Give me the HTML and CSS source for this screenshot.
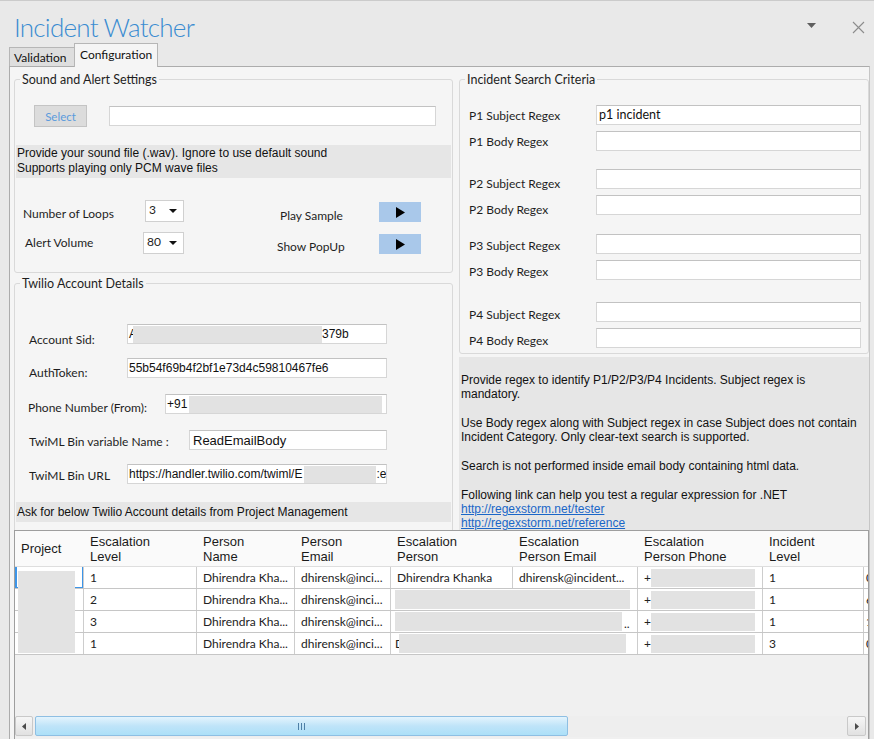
FILE: index.html
```html
<!DOCTYPE html>
<html lang="en">
<head>
<meta charset="utf-8">
<title>Incident Watcher</title>
<link rel="stylesheet" href="styles.css">
</head>
<body>
<div class="window">
  <header class="titlebar">
    <h1 class="app-title">Incident Watcher</h1>
    <div class="win-controls">
      <svg class="ctl-caret" width="9" height="5" viewBox="0 0 9 5"><path d="M0 0H9L4.5 5Z" fill="#5f5f5f"/></svg>
      <svg class="ctl-close" width="13" height="13" viewBox="0 0 13 13"><path d="M1 1L12 12M12 1L1 12" stroke="#8c8c8c" stroke-width="1.1" fill="none"/></svg>
    </div>
  </header>

  <nav class="tabs">
    <div class="tab tab-validation">Validation</div>
    <div class="tab tab-active">Configuration</div>
  </nav>

  <main class="tabpage">
    <section class="upper">
      <div class="col col-left">
        <fieldset class="group group-sound">
          <legend>Sound and Alert Settings</legend>
          <div class="select-row">
            <button class="btn-select" type="button">Select</button>
            <div class="textbox tb-file"></div>
          </div>
          <div class="note note-sound">Provide your sound file (.wav). Ignore to use default sound<br>Supports playing only PCM wave files</div>
          <div class="opt-row opt-loops">
            <span class="lbl lbl-loops">Number of Loops</span>
            <div class="combo combo-loops"><span class="combo-val">3</span><span class="combo-caret"></span></div>
            <span class="lbl lbl-play">Play Sample</span>
            <button class="btn-play" type="button"><svg width="9" height="11" viewBox="0 0 9 11"><path d="M0 0L9 5.5L0 11Z" fill="#000"/></svg></button>
          </div>
          <div class="opt-row opt-volume">
            <span class="lbl lbl-volume">Alert Volume</span>
            <div class="combo combo-volume"><span class="combo-val">80</span><span class="combo-caret"></span></div>
            <span class="lbl lbl-popup">Show PopUp</span>
            <button class="btn-play" type="button"><svg width="9" height="11" viewBox="0 0 9 11"><path d="M0 0L9 5.5L0 11Z" fill="#000"/></svg></button>
          </div>
        </fieldset>

        <fieldset class="group group-twilio">
          <legend>Twilio Account Details</legend>
          <div class="trow trow-sid">
            <span class="lbl tl tl-sid">Account Sid:</span>
            <div class="textbox tb-tw tb-w260"><span>A</span><span class="redact r-sid"></span><span>379b</span></div>
          </div>
          <div class="trow trow-token">
            <span class="lbl tl tl-token">AuthToken:</span>
            <div class="textbox tb-tw tb-w260"><span>55b54f69b4f2bf1e73d4c59810467fe6</span></div>
          </div>
          <div class="trow trow-phone">
            <span class="lbl tl tl-phone">Phone Number (From):</span>
            <div class="textbox tb-tw tb-w222"><span>+91</span><span class="redact r-phone"></span></div>
          </div>
          <div class="trow trow-var">
            <span class="lbl tl tl-var">TwiML Bin variable Name :</span>
            <div class="textbox tb-tw tb-w198"><span class="tw-big">ReadEmailBody</span></div>
          </div>
          <div class="trow trow-url">
            <span class="lbl tl tl-url">TwiML Bin URL</span>
            <div class="textbox tb-tw tb-w260"><span>https://handler.twilio.com/twiml/E</span><span class="redact r-url"></span><span>:e</span></div>
          </div>
          <div class="note note-twilio">Ask for below Twilio Account details from Project Management</div>
        </fieldset>
      </div>

      <div class="col col-right">
        <fieldset class="group group-search">
          <legend>Incident Search Criteria</legend>
          <div class="rpair rp1">
            <div class="rrow"><span class="lbl rl">P1 Subject Regex</span><div class="textbox tb-regex">p1 incident</div></div>
            <div class="rrow"><span class="lbl rl">P1 Body Regex</span><div class="textbox tb-regex"></div></div>
          </div>
          <div class="rpair rp2">
            <div class="rrow"><span class="lbl rl">P2 Subject Regex</span><div class="textbox tb-regex"></div></div>
            <div class="rrow"><span class="lbl rl">P2 Body Regex</span><div class="textbox tb-regex"></div></div>
          </div>
          <div class="rpair rp3">
            <div class="rrow"><span class="lbl rl">P3 Subject Regex</span><div class="textbox tb-regex"></div></div>
            <div class="rrow"><span class="lbl rl">P3 Body Regex</span><div class="textbox tb-regex"></div></div>
          </div>
          <div class="rpair rp4">
            <div class="rrow"><span class="lbl rl">P4 Subject Regex</span><div class="textbox tb-regex"></div></div>
            <div class="rrow"><span class="lbl rl">P4 Body Regex</span><div class="textbox tb-regex"></div></div>
          </div>
        </fieldset>
        <div class="note note-search">
          <p>Provide regex to identify P1/P2/P3/P4 Incidents. Subject regex is<br>mandatory.</p>
          <p>Use Body regex along with Subject regex in case Subject does not contain<br>Incident Category. Only clear-text search is supported.</p>
          <p>Search is not performed inside email body containing html data.</p>
          <p>Following link can help you test a regular expression for .NET<br><a href="#">http://regexstorm.net/tester</a><br><a href="#">http://regexstorm.net/reference</a></p>
        </div>
      </div>
    </section>

    <section class="datagrid">
      <div class="gviewport">
        <div class="grow ghead">
          <div class="hcell hfirst">Project</div>
          <div class="hcell">Escalation<br>Level</div>
          <div class="hcell">Person<br>Name</div>
          <div class="hcell">Person<br>Email</div>
          <div class="hcell">Escalation<br>Person</div>
          <div class="hcell">Escalation<br>Person Email</div>
          <div class="hcell">Escalation<br>Person Phone</div>
          <div class="hcell">Incident<br>Level</div>
          <div class="hcell"></div>
        </div>
        <div class="gbody">
          <div class="grow drow">
            <div class="dcell dfirst focus"></div>
            <div class="dcell">1</div>
            <div class="dcell">Dhirendra Kha...</div>
            <div class="dcell">dhirensk@inci...</div>
            <div class="dcell">Dhirendra Khanka</div>
            <div class="dcell">dhirensk@incident...</div>
            <div class="dcell">+<span class="redact r-ph"></span></div>
            <div class="dcell">1</div>
            <div class="dcell dlast">0</div>
          </div>
          <div class="grow drow">
            <div class="dcell dfirst"></div>
            <div class="dcell">2</div>
            <div class="dcell">Dhirendra Kha...</div>
            <div class="dcell">dhirensk@inci...</div>
            <div class="dcell span2"><span class="redact r-esc2"></span></div>
            <div class="dcell">+<span class="redact r-ph"></span></div>
            <div class="dcell">1</div>
            <div class="dcell dlast">6</div>
          </div>
          <div class="grow drow">
            <div class="dcell dfirst"></div>
            <div class="dcell">3</div>
            <div class="dcell">Dhirendra Kha...</div>
            <div class="dcell">dhirensk@inci...</div>
            <div class="dcell span2"><span class="redact r-esc3"></span><span class="dots">..</span></div>
            <div class="dcell">+<span class="redact r-ph"></span></div>
            <div class="dcell">1</div>
            <div class="dcell dlast">1</div>
          </div>
          <div class="grow drow">
            <div class="dcell dfirst"></div>
            <div class="dcell">1</div>
            <div class="dcell">Dhirendra Kha...</div>
            <div class="dcell">dhirensk@inci...</div>
            <div class="dcell span2"><span class="cut">D</span><span class="redact r-esc4"></span></div>
            <div class="dcell">+<span class="redact r-ph"></span></div>
            <div class="dcell">3</div>
            <div class="dcell dlast">0</div>
          </div>
          <div class="redact-project"></div>
        </div>
      </div>
      <div class="hscroll">
        <div class="sb-btn"><svg width="4" height="7" viewBox="0 0 4 7"><path d="M4 0V7L0 3.5Z" fill="#4a4a4a"/></svg></div>
        <div class="sb-thumb"><span class="grip"></span><span class="grip"></span><span class="grip"></span></div>
        <div class="sb-track"></div>
        <div class="sb-btn sb-right"><svg width="4" height="7" viewBox="0 0 4 7"><path d="M0 0V7L4 3.5Z" fill="#4a4a4a"/></svg></div>
      </div>
    </section>
  </main>
</div>
</body>
</html>
```

FILE: styles.css
```css
* { box-sizing: border-box; }
html, body { margin: 0; padding: 0; }
body {
  width: 874px;
  height: 739px;
  overflow: hidden;
  background: #e9e9e9;
  font-family: "Lato", "Open Sans", sans-serif;
  color: #1e1e1e;
}

.window {
  width: 874px;
  height: 739px;
  background: #e9e9e9;
  border-top: 1px solid #cbcbcb;
  display: flex;
  flex-direction: column;
  overflow: hidden;
}

/* Title bar */
.titlebar {
  height: 42px;
  flex: none;
  display: flex;
  justify-content: space-between;
}
.app-title {
  margin: 0;
  padding: 14px 0 0 14px;
  font-family: "Lato", "Open Sans", sans-serif;
  font-weight: 300;
  font-size: 26px;
  line-height: 25px;
  letter-spacing: -0.75px;
  color: #3a8cd1;
}
.win-controls {
  display: flex;
  align-items: flex-start;
  gap: 36px;
  padding-right: 9px;
}
.ctl-caret { margin-top: 22px; }
.ctl-close { margin-top: 20px; }

/* Tabs */
.tabs {
  height: 23px;
  flex: none;
  display: flex;
  align-items: flex-end;
  padding-left: 9px;
}
.tab {
  font-size: 12px;
  line-height: 17px;
  color: #111;
  border: 1px solid #b6b6b6;
  border-bottom: none;
  white-space: nowrap;
}
.tab-validation {
  height: 19px;
  width: 65px;
  background: #dedede;
  padding: 1px 0 0 4px;
  border-right: none;
}
.tab-active {
  height: 24px;
  width: 84px;
  background: #f5f5f5;
  padding: 2px 0 0 5px;
  margin-bottom: -1px;
  position: relative;
  z-index: 1;
}

/* Tab page */
.tabpage {
  flex: 1;
  margin-left: 9px;
  width: 861px;
  border: 1px solid #acacac;
  border-bottom: none;
  border-right-color: #c6c6c6;
  background: #f5f5f5;
  padding-left: 4px;
  display: flex;
  flex-direction: column;
}

.upper {
  height: 463px;
  flex: none;
  display: grid;
  grid-template-columns: 439px 410px;
  column-gap: 6px;
  padding-top: 4px;
  overflow: hidden;
  align-items: start;
}

/* Group boxes */
.group {
  margin: 0;
  padding: 0 1px;
  border: 1px solid #d9d9d9;
  border-radius: 3px;
  min-width: 0;
}
.group legend {
  margin-left: 4px;
  padding: 0 2px;
  font-size: 12.5px;
  line-height: 17px;
  color: #1e1e1e;
}
.group-sound { height: 202px; }
.group-twilio { height: 262px; margin-top: 2px; }
.group-search { height: 283px; }

.lbl {
  font-size: 12px;
  line-height: 16px;
  white-space: nowrap;
  color: #1e1e1e;
  flex: none;
}

.textbox {
  background: #fff;
  border: 1px solid #d6d6d6;
  border-top-color: #c2c2c2;
  flex: none;
}

.note {
  background: #e6e6e6;
  font-family: "Liberation Sans", Arial, sans-serif;
  font-size: 12px;
  color: #111;
}

/* Sound settings */
.select-row {
  display: flex;
  margin-top: 17px;
  padding-left: 18px;
}
.btn-select {
  width: 53px;
  height: 22px;
  border: 1px solid #c4c4c4;
  background: #dcdcdc;
  color: #5b9bdc;
  font-family: "Lato", "Open Sans", sans-serif;
  font-size: 11.5px;
  padding: 0;
  flex: none;
}
.tb-file {
  width: 327px;
  height: 20px;
  margin: 1px 0 0 22px;
}
.note-sound {
  margin-top: 18px;
  height: 33px;
  padding: 1px 0 0 1px;
  line-height: 15px;
}
.opt-row {
  display: flex;
  align-items: flex-start;
  height: 22px;
}
.opt-loops { margin-top: 22px; }
.opt-volume { margin-top: 10px; }
.lbl-loops { width: 129px; padding-left: 7px; margin-top: 6px; }
.lbl-play { margin-left: 96px; width: 99px; margin-top: 8px; }
.lbl-volume { width: 127px; padding-left: 9px; margin-top: 3px; }
.lbl-popup { margin-left: 93px; width: 102px; margin-top: 7px; }

.combo {
  height: 22px;
  background: #fff;
  border: 1px solid #d0d0d0;
  display: flex;
  align-items: center;
  justify-content: space-between;
  padding: 0 6px 0 3px;
  font-size: 12px;
  flex: none;
}
.combo-loops { width: 39px; }
.combo-volume { width: 41px; }
.combo-val { margin-top: -3px; }
.combo-caret {
  width: 0;
  height: 0;
  border-left: 4px solid transparent;
  border-right: 4px solid transparent;
  border-top: 4px solid #111;
}
.btn-play {
  width: 42px;
  height: 20px;
  margin-top: 2px;
  background: #a9c8ea;
  border: none;
  padding: 0;
  display: flex;
  align-items: center;
  justify-content: center;
  flex: none;
}

/* Twilio */
.trow {
  display: flex;
  align-items: flex-start;
  height: 20px;
}
.trow-sid { margin-top: 32px; }
.trow-token { margin-top: 14px; }
.trow-phone { margin-top: 16px; }
.trow-var { margin-top: 16px; }
.trow-url { margin-top: 14px; }
.tl { padding-left: 13px; }
.tl-sid { width: 111px; margin-top: 8px; }
.tl-token { width: 111px; margin-top: 7px; }
.tl-phone { width: 149px; padding-left: 12px; margin-top: 6px; }
.tl-var { width: 173px; margin-top: 4px; }
.tl-url { width: 111px; margin-top: 4px; }

.tb-tw {
  height: 20px;
  display: flex;
  align-items: center;
  padding-left: 1px;
  font-family: "Liberation Sans", Arial, sans-serif;
  font-size: 12px;
  color: #111;
  overflow: hidden;
  white-space: nowrap;
}
.tw-big { font-size: 13px; padding-left: 2px; }
.tb-w260 { width: 260px; }
.tb-w222 { width: 222px; }
.tb-w198 { width: 198px; }

.redact {
  display: inline-block;
  background: #e2e2e2;
  flex: none;
}
.r-sid { width: 189px; height: 17px; margin-left: -4px; }
.r-phone { width: 193px; height: 17px; margin-left: 2px; }
.r-url { width: 72px; height: 17px; margin-left: 2px; }

.note-twilio {
  margin-top: 18px;
  height: 20px;
  line-height: 20px;
  padding-left: 1px;
}

/* Search criteria */
.rpair { display: flex; flex-direction: column; gap: 6px; }
.rp1 { margin-top: 17px; }
.rp2 { margin-top: 18px; }
.rp3 { margin-top: 19px; }
.rp4 { margin-top: 22px; }
.rrow { display: flex; align-items: flex-start; height: 20px; }
.rl { width: 135px; padding-left: 8px; }
.rp1 .rl { margin-top: 3px; }
.rp2 .rl { margin-top: 7px; }
.rp3 .rl { margin-top: 4px; }
.rp4 .rl { margin-top: 5px; }
.tb-regex {
  width: 265px;
  height: 20px;
  font-size: 12.5px;
  line-height: 18px;
  padding-left: 2px;
  color: #111;
}

.note-search {
  margin-top: 3px;
  height: 180px;
  padding: 16px 0 0 2px;
  line-height: 14px;
  white-space: nowrap;
}
.note-search p { margin: 0 0 15px; }
.note-search a { color: #1a66c8; text-decoration: underline; }

/* Data grid */
.datagrid {
  height: 209px;
  width: 855px;
  flex: none;
  border: 1px solid #9e9e9e;
  border-bottom: none;
  display: flex;
  flex-direction: column;
  background: #f0f0f0;
}
.gviewport {
  height: 185px;
  flex: none;
  overflow: hidden;
}
.grow {
  display: grid;
  grid-template-columns: 68px 113px 98px 96px 122px 125px 125px 101px 40px;
  width: 888px;
}
.ghead {
  height: 36px;
  background: #fafafa;
  border-bottom: 1px solid #dedede;
  align-items: center;
  font-family: "Liberation Sans", Arial, sans-serif;
  font-size: 13px;
  line-height: 15px;
  color: #1a1a1a;
}
.hcell { padding-left: 7px; white-space: nowrap; }
.hfirst { padding-left: 6px; }

.gbody {
  height: 149px;
  position: relative;
}
.drow {
  height: 22px;
  background: #fff;
  border-bottom: 1px solid #c6c6c6;
  font-size: 12px;
  color: #222;
}
.dcell {
  border-left: 1px solid #cdcdcd;
  padding-left: 6px;
  display: flex;
  align-items: center;
  white-space: nowrap;
  overflow: hidden;
}
.dfirst { border-left: none; }
.dlast { padding-left: 2px; }
.focus { box-shadow: inset 2px 0 0 #3d95e8, inset -1px -1px 0 #3d95e8; }
.span2 { grid-column: span 2; padding-left: 4px; }
.r-ph { width: 104px; height: 18px; margin-left: 0; }
.r-esc2 { width: 235px; height: 19px; }
.r-esc3 { width: 227px; height: 19px; }
.r-esc4 { width: 227px; height: 19px; }
.dots { padding-left: 2px; margin-top: 4px; }
.cut { width: 4px; overflow: hidden; flex: none; }
.redact-project {
  position: absolute;
  left: 3px;
  top: 4px;
  width: 57px;
  height: 82px;
  background: #e3e3e3;
}

/* Horizontal scrollbar */
.hscroll {
  height: 21px;
  flex: none;
  display: flex;
  align-items: flex-start;
  background: #eeeeee;
}
.sb-btn {
  width: 18px;
  height: 20px;
  border: 1px solid #c9c9c9;
  border-radius: 2px;
  background: linear-gradient(#f6f6f6, #e1e1e1);
  display: flex;
  align-items: center;
  justify-content: center;
  flex: none;
}
.sb-right { width: 19px; margin-right: 2px; }
.sb-thumb {
  margin-left: 2px;
  width: 533px;
  height: 20px;
  border: 1px solid #8ebfe3;
  border-radius: 2px;
  background: linear-gradient(#e4f4fd, #bfe4f9 50%, #ace0f8);
  display: flex;
  align-items: center;
  justify-content: center;
  gap: 2px;
  flex: none;
}
.grip { width: 1px; height: 7px; background: #4e7fa6; }
.sb-track { flex: 1; }
```
